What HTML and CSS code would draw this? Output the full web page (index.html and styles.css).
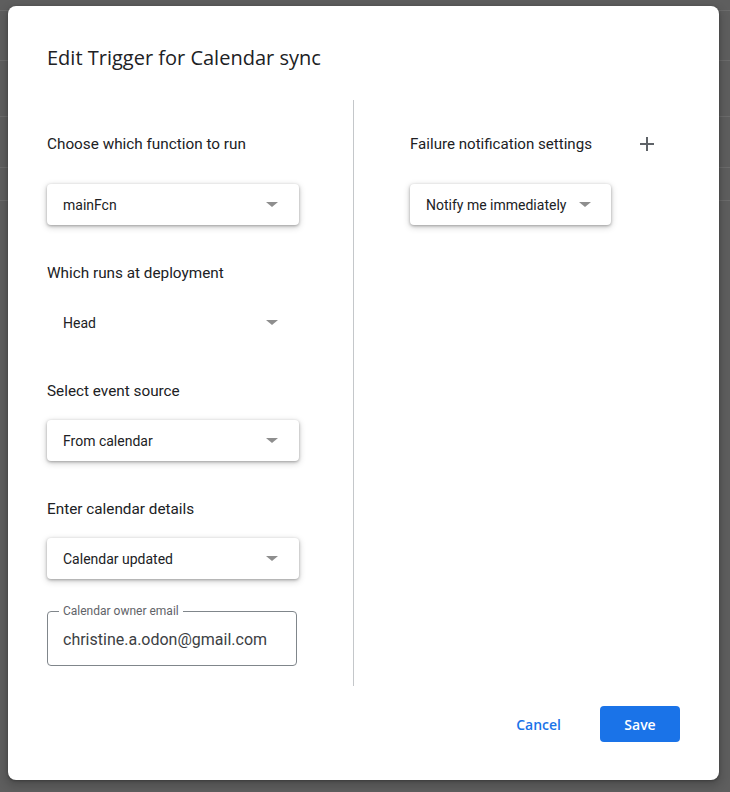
FILE: index.html
```html
<!DOCTYPE html>
<html>
<head>
<meta charset="utf-8">
<link rel="stylesheet" href="styles.css">
</head>
<body>
<div class="backdrop">
  <div class="bg-row r1"></div>
  <div class="bg-row r2"></div>
  <div class="bg-row r3"></div>
  <div class="bg-row r4"></div>
  <div class="bg-row r5"></div>
</div>
<div class="dialog">
  <h1 class="title">Edit Trigger for Calendar sync</h1>
  <div class="body">
    <div class="col col-left">
      <div class="label">Choose which function to run</div>
      <div class="select raised first"><span>mainFcn</span><i class="arrow"></i></div>
      <div class="label">Which runs at deployment</div>
      <div class="select flat"><span>Head</span><i class="arrow"></i></div>
      <div class="label">Select event source</div>
      <div class="select raised"><span>From calendar</span><i class="arrow"></i></div>
      <div class="label">Enter calendar details</div>
      <div class="select raised"><span>Calendar updated</span><i class="arrow"></i></div>
      <div class="field">
        <span class="field-label">Calendar owner email</span>
        <span class="field-value">christine.a.odon@gmail.com</span>
      </div>
    </div>
    <div class="col col-right">
      <div class="label-row">
        <div class="label">Failure notification settings</div>
        <svg class="plus" width="14" height="14" viewBox="0 0 14 14"><path d="M7 0v14M0 7h14" stroke="#5f6368" stroke-width="2" fill="none"/></svg>
      </div>
      <div class="select raised inline first"><span>Notify me immediately</span><i class="arrow"></i></div>
    </div>
  </div>
  <div class="footer">
    <button class="btn btn-text">Cancel</button>
    <button class="btn btn-primary">Save</button>
  </div>
</div>
</body>
</html>
```

FILE: styles.css
```css
* { box-sizing: border-box; }
html, body { margin: 0; padding: 0; }
body {
  width: 730px;
  height: 792px;
  background: #5e5e5e;
  font-family: Roboto, "Liberation Sans", sans-serif;
  position: relative;
  overflow: hidden;
}
.backdrop { display: flex; flex-direction: column; }
.bg-row { border-bottom: 1px solid #6c6c6c; }
.r1 { height: 11px; }
.r2 { height: 50px; }
.r3 { height: 56px; }
.r4 { height: 51px; }
.r5 { height: 33px; }

.dialog {
  position: absolute;
  left: 8px;
  top: 6px;
  width: 711px;
  height: 774px;
  background: #fff;
  border-radius: 8px;
  box-shadow: 0 4px 8px 3px rgba(0,0,0,0.15), 0 1px 3px rgba(0,0,0,0.3);
  padding: 38px 39px 38px 39px;
  display: flex;
  flex-direction: column;
}
.title {
  margin: 0;
  font-family: "Open Sans", Roboto, sans-serif;
  font-weight: 500;
  font-size: 20px;
  line-height: 28px;
  color: #202124;
  letter-spacing: 0;
}
.body {
  margin-top: 28px;
  display: flex;
  height: 586px;
}
.col-left {
  width: 307px;
  border-right: 1px solid #c4c7ca;
  padding-top: 32px;
  display: flex;
  flex-direction: column;
  align-items: flex-start;
}
.col-right {
  padding-top: 32px;
  padding-left: 56px;
  display: flex;
  flex-direction: column;
  align-items: flex-start;
}
.label {
  font-size: 15.3px;
  line-height: 24px;
  color: #202124;
}
.label-row {
  display: flex;
  align-items: center;
  width: 244px;
  justify-content: space-between;
}
.col-right .label { font-size: 15.1px; }
.plus { display: block; }
.select {
  width: 252px;
  height: 41px;
  border-radius: 4px;
  display: flex;
  align-items: center;
  justify-content: space-between;
  padding: 0 21px 0 16px;
  font-size: 14px;
  color: #202124;
  margin-top: 17px;
  margin-bottom: 36px;
}
.select.first { margin-top: 28px; }
.select.raised {
  background: #fff;
  box-shadow: 0 1px 3px rgba(0,0,0,0.3), 0 2px 6px 1px rgba(0,0,0,0.15);
}
.select.inline {
  width: auto;
  gap: 13px;
  padding-right: 20px;
}
.arrow {
  display: block;
  width: 0;
  height: 0;
  border-left: 6px solid transparent;
  border-right: 6px solid transparent;
  border-top: 5px solid #8e8e8e;
}
.field {
  position: relative;
  width: 250px;
  height: 55px;
  border: 1px solid #80868b;
  border-radius: 4px;
  margin-top: -4px;
  display: flex;
  align-items: center;
  padding-left: 15px;
}
.field-label {
  position: absolute;
  top: -8px;
  left: 11px;
  padding: 0 4px;
  background: #fff;
  font-size: 12px;
  line-height: 14px;
  color: #5f6368;
}
.field-value {
  font-size: 16px;
  color: #3c4043;
  margin-top: 2px;
}
.footer {
  margin-top: 20px;
  display: flex;
  justify-content: flex-end;
  align-items: center;
}
.btn {
  font-family: "Open Sans", Roboto, sans-serif;
  font-size: 14px;
  font-weight: 600;
  border: none;
  height: 36px;
  border-radius: 4px;
  cursor: pointer;
}
.btn-text {
  background: transparent;
  color: #1a73e8;
  padding: 0 16px;
  margin-right: 23px;
}
.btn-primary {
  background: #1a73e8;
  color: #fff;
  width: 80px;
}
```
